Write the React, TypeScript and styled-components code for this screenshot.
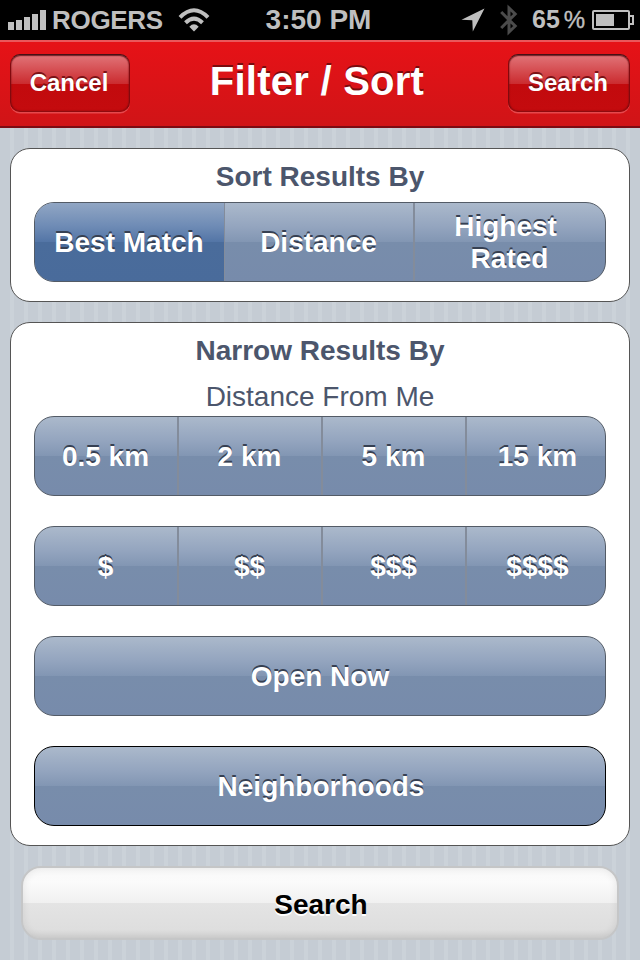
import React from 'react';
import styled, { createGlobalStyle, css } from 'styled-components';

const GlobalStyle = createGlobalStyle`
  * { box-sizing: border-box; }
  body {
    margin: 0;
    background: #c5cbd3;
    font-family: "Liberation Sans", Arial, sans-serif;
  }
`;

const Screen = styled.div`
  width: 640px;
  height: 960px;
  overflow: hidden;
  display: flex;
  flex-direction: column;
  background: repeating-linear-gradient(to right, #c5ccd4 0, #c5ccd4 10px, #cbd2d9 10px, #cbd2d9 14px);
`;

const StatusBar = styled.div`
  height: 40px;
  flex: none;
  display: grid;
  grid-template-columns: 1fr auto 1fr;
  align-items: center;
  padding-bottom: 2px;
  background: #000;
  color: #bfbfbf;
  font-size: 26px;
  line-height: 38px;
  font-weight: bold;
  svg { display: block; flex: none; }
`;

const StatusLeft = styled.div`
  display: flex;
  align-items: center;
  padding-left: 8px;
`;

const Carrier = styled.span`
  margin-left: 6px;
  width: 126px;
  letter-spacing: -0.3px;
`;

const Clock = styled.span`
  font-size: 28px;
  padding-right: 3px;
`;

const StatusRight = styled.div`
  display: flex;
  align-items: center;
  justify-content: flex-end;
  padding-right: 6px;
`;

const Percent = styled.span`
  font-size: 25px;
  width: 60px;
  margin-left: 14px;
  white-space: nowrap;
`;

const PercentSign = styled.span`
  font-weight: normal;
  margin-left: 4px;
  font-size: 24px;
  -webkit-text-stroke: 0.4px #bfbfbf;
`;

const NavBar = styled.header`
  height: 88px;
  flex: none;
  display: flex;
  align-items: center;
  justify-content: space-between;
  padding: 0 10px;
  border-top: 2px solid #ea575b;
  border-bottom: 2px solid #7c0b13;
  background: linear-gradient(#e61217, #d01417);
`;

const Title = styled.h1`
  margin: 0;
  padding: 0 4px 6px 0;
  color: #fff;
  font-size: 40px;
  line-height: 46px;
  letter-spacing: 0.25px;
  text-shadow: 0 -2px 0 #7a0b0e;
`;

const NavButton = styled.button<{ $width: number }>`
  width: ${p => p.$width}px;
  height: 58px;
  margin-bottom: 2px;
  padding: 0 2px 0 0;
  border: 1px solid;
  border-color: #471014 #82090d #8f0a0e;
  border-radius: 10px;
  background: linear-gradient(#e17478 0%, #cb2c30 51%, #c20a0d 51%, #c40b0e 100%);
  box-shadow: inset 0 1px 1px #70252a, inset 0 0 2px #83090d, 0 1.5px 0 #e5494d;
  color: #fff;
  font: bold 24px/28px "Liberation Sans", Arial, sans-serif;
  text-shadow: 0 -2px 0 #7c1216;
`;

const Content = styled.main`
  display: flex;
  flex-direction: column;
  gap: 20px;
  padding: 20px 10px 0;
`;

const Card = styled.section<{ $height: number }>`
  height: ${p => p.$height}px;
  padding: 12px 23px 0;
  border: 1px solid #555;
  border-radius: 20px;
  background: #fff;
  color: #4c566c;
`;

const Heading = styled.h2`
  margin: 0;
  font-size: 28px;
  line-height: 32px;
  text-align: center;
`;

const Subheading = styled.h3`
  margin: 14px 0 0;
  font-size: 28px;
  line-height: 32px;
  font-weight: normal;
  text-align: center;
`;

const slate = 'linear-gradient(#abb9cb 0%, #94a5bf 30%, #8296b3 50%, #788dab 50%, #778bab 100%)';
const selected = 'linear-gradient(#91a6c4 0%, #6e8bb5 30%, #5375a6 50%, #4a6c9b 50%, #496b9b 100%)';

const whiteLabel = css`
  color: #fff;
  font: bold 28px/32px "Liberation Sans", Arial, sans-serif;
  text-align: center;
  text-shadow: 0 -2px 0 #364052;
`;

const Group = styled.div<{ $columns: string; $top: number }>`
  display: grid;
  grid-template-columns: ${p => p.$columns};
  height: 80px;
  margin-top: ${p => p.$top}px;
  border: 1px solid #535b66;
  border-radius: 20px;
  overflow: hidden;
  background: ${slate};
`;

const Segment = styled.button<{ $selected?: boolean; $line?: number }>`
  ${whiteLabel}
  display: flex;
  align-items: center;
  justify-content: center;
  min-width: 0;
  padding: 2px 1px 0 0;
  border: 0;
  border-right: ${p => p.$line ?? 0}px solid #838c9b;
  background: ${p => (p.$selected ? selected : 'transparent')};
  white-space: pre;
  &:nth-child(4) { padding: 2px 0 0 3px; }
`;

const WideButton = styled.button<{ $strong?: boolean }>`
  ${whiteLabel}
  display: block;
  width: 100%;
  height: 80px;
  margin-top: 30px;
  padding: 2px 0 0;
  padding-left: ${p => (p.$strong ? 2 : 0)}px;
  border: 1px solid ${p => (p.$strong ? '#000' : '#535b66')};
  border-radius: 20px;
  background: ${slate};
`;

const SearchButton = styled.button`
  height: 74px;
  margin: 0 11px;
  padding: 3px 0 0 2px;
  border: 2px solid #c5c6c7;
  border-radius: 20px;
  background: linear-gradient(#f9f9f9, #fbfbfb 20%, #f0f0f0 50%, #e4e4e4 50%, #dedede 88%, #d3d3d3);
  box-shadow: inset 0 0 8px rgba(0, 0, 0, 0.09);
  color: #000;
  font: bold 28px/32px "Liberation Sans", Arial, sans-serif;
  text-shadow: 0 2px 0 #fff;
`;

const SignalIcon = () => (
  <svg width="38" height="20" viewBox="0 0 38 20" fill="#bfbfbf">
    <rect x="0" y="12" width="6" height="8" />
    <rect x="8" y="10" width="6" height="10" />
    <rect x="16" y="7" width="6" height="13" />
    <rect x="24" y="4" width="6" height="16" />
    <rect x="32" y="0" width="6" height="20" />
  </svg>
);

const WifiIcon = () => (
  <svg width="32" height="24" viewBox="0 0 32 24">
    <g fill="none" stroke="#bfbfbf" strokeWidth="4">
      <path d="M2 9.3Q16 -4.7 30 9.3" />
      <path d="M7.5 14.7Q16 6.4 24.5 14.7" />
    </g>
    <path d="M11.3 18.7Q16 14 20.7 18.7L16 23.5Z" fill="#bfbfbf" />
  </svg>
);

const LocationIcon = () => (
  <svg width="24" height="24" viewBox="0 0 24 24">
    <path d="M23.5 0.5L11.8 23.5L11.3 12.3L0.5 11.8Z" fill="#bfbfbf" />
  </svg>
);

const BluetoothIcon = () => (
  <svg width="18" height="32" viewBox="0 0 18 32" fill="none" stroke="#4b4b4b" strokeWidth="3">
    <path d="M1.2 8L15.2 22L9 28V4L15.2 10L1.2 24" />
  </svg>
);

const BatteryIcon = () => (
  <svg width="42" height="20" viewBox="0 0 42 20">
    <path d="M37 6H41V14H37" fill="none" stroke="#bfbfbf" strokeWidth="2" />
    <rect x="1" y="1" width="36" height="18" rx="1" fill="none" stroke="#bfbfbf" strokeWidth="2" />
    <rect x="4" y="4" width="18" height="12" fill="#bfbfbf" />
  </svg>
);

const LocationSlot = styled.div`
  margin-right: 15px;
`;

const distances = ['0.5 km', '2 km', '5 km', '15 km'];
const prices = ['$', '$$', '$$$', '$$$$'];
const quarters = '144px 144px 144px 1fr';

export default function App() {
  return (
    <Screen>
      <GlobalStyle />
      <StatusBar>
        <StatusLeft>
          <SignalIcon />
          <Carrier>ROGERS</Carrier>
          <WifiIcon />
        </StatusLeft>
        <Clock>3:50 PM</Clock>
        <StatusRight>
          <LocationSlot><LocationIcon /></LocationSlot>
          <BluetoothIcon />
          <Percent>65<PercentSign>%</PercentSign></Percent>
          <BatteryIcon />
        </StatusRight>
      </StatusBar>
      <NavBar>
        <NavButton $width={120}>Cancel</NavButton>
        <Title>Filter / Sort</Title>
        <NavButton $width={122}>Search</NavButton>
      </NavBar>
      <Content>
        <Card $height={154}>
          <Heading>Sort Results By</Heading>
          <Group $columns="190px 190px 1fr" $top={9}>
            <Segment $selected $line={1}>Best Match</Segment>
            <Segment $line={2}>Distance</Segment>
            <Segment>{'Highest \nRated'}</Segment>
          </Group>
        </Card>
        <Card $height={524}>
          <Heading>Narrow Results By</Heading>
          <Subheading>Distance From Me</Subheading>
          <Group $columns={quarters} $top={3}>
            {distances.map((d, i) => <Segment key={d} $line={i < 3 ? 2 : 0}>{d}</Segment>)}
          </Group>
          <Group $columns={quarters} $top={30}>
            {prices.map((p, i) => <Segment key={p} $line={i < 3 ? 2 : 0}>{p}</Segment>)}
          </Group>
          <WideButton>Open Now</WideButton>
          <WideButton $strong>Neighborhoods</WideButton>
        </Card>
        <SearchButton>Search</SearchButton>
      </Content>
    </Screen>
  );
}
